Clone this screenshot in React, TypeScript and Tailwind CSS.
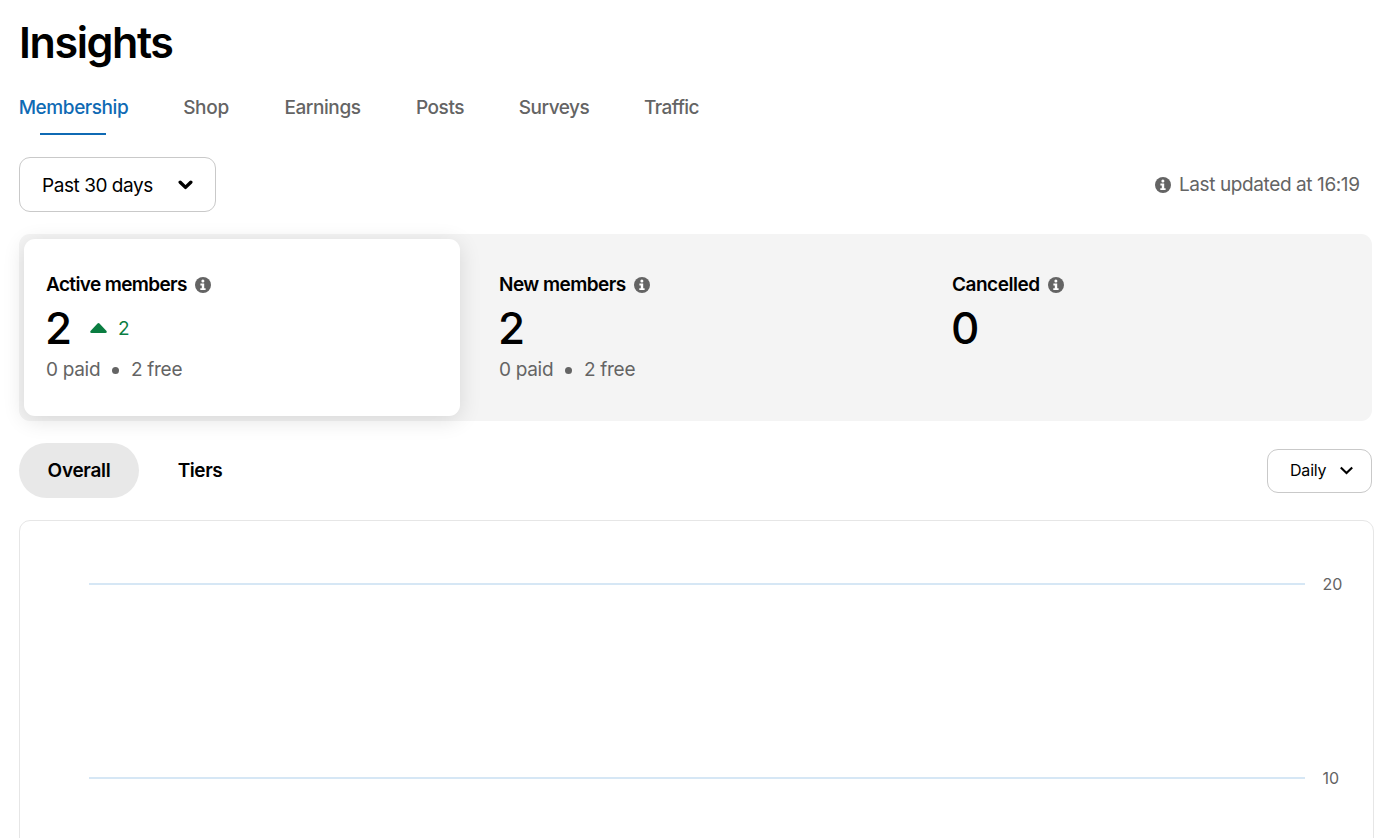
import React from 'react';

interface Tab {
  label: string;
  width: string;
  tracking: string;
}

const tabs: Tab[] = [
  { label: 'Membership', width: 'w-[109px]', tracking: 'tracking-[-0.42px]' },
  { label: 'Shop', width: 'w-[46px]', tracking: 'tracking-[-0.3px]' },
  { label: 'Earnings', width: 'w-[77px]', tracking: 'tracking-[-0.42px]' },
  { label: 'Posts', width: 'w-[48px]', tracking: 'tracking-[-0.45px]' },
  { label: 'Surveys', width: 'w-[70px]', tracking: 'tracking-[-0.5px]' },
  { label: 'Traffic', width: 'w-[55px]', tracking: 'tracking-[-0.55px]' },
];

function InfoIcon() {
  return (
    <svg className="h-4 w-4 shrink-0" viewBox="0 0 16 16">
      <circle cx="8" cy="8" r="8" fill="#646464" />
      <circle cx="7.9" cy="4.1" r="1.5" fill="white" />
      <path d="M5.4 6.5h3.8v4.7h1.4v1.9H5.3v-1.9h1.5V8.4H5.4Z" fill="white" />
    </svg>
  );
}

interface StatProps {
  title: string;
  titleClass: string;
  value: string;
  change?: string;
  paid?: string;
  free?: string;
  active?: boolean;
}

function Stat({ title, titleClass, value, change, paid, free, active }: StatProps) {
  return (
    <div
      className={`h-[177px] w-[436px] rounded-[11px] px-[22px] pt-8 ${
        active ? 'bg-white shadow-[0_4px_22px_rgba(0,0,0,0.12)]' : ''
      }`}
    >
      <div className="flex h-7 items-center gap-2">
        <span className={`whitespace-nowrap text-[19px] font-semibold ${titleClass}`}>{title}</span>
        <InfoIcon />
      </div>
      <div className="flex h-[58px] items-center">
        <span className="-ml-px w-7 text-[44px] leading-[58px] font-medium">{value}</span>
        {change && (
          <>
            <svg className="ml-[17px] h-[10px] w-[17px]" viewBox="0 0 17 10" fill="#0a7d41">
              <path d="M7.5.5a1.5 1.5 0 0 1 2 0L16.5 8q.8 2-1 2H1.5q-1.8 0-1-2Z" />
            </svg>
            <span className="ml-[11px] pt-[3px] text-[19px] text-[#0a7d41]">{change}</span>
          </>
        )}
      </div>
      {paid && (
        <div className="mt-[2px] flex h-[22px] items-center whitespace-nowrap text-[19px] tracking-[-0.3px] text-[#646464]">
          <span className="w-[55px]">{paid}</span>
          <span className="mr-3 ml-[11px] h-[7px] w-[7px] rounded-full bg-[#646464]" />
          <span>{free}</span>
        </div>
      )}
    </div>
  );
}

function GridLine({ label }: { label: string }) {
  return (
    <div className="flex h-6 items-center">
      <div className="h-[2px] w-[1216px] bg-[#d6e7f5]" />
      <span className="ml-[18px] text-[16px] text-[#646464]">{label}</span>
    </div>
  );
}

export default function App() {
  return (
    <div className="h-[838px] w-[1398px] overflow-hidden bg-white pl-[19px] font-['Inter','Liberation_Sans',sans-serif] text-black">
      <h1 className="h-[86px] pt-3 text-[43px] leading-[60px] font-semibold tracking-[-1.4px]">Insights</h1>

      <nav className="flex h-[49px] gap-[55px]">
        {tabs.map((tab, i) => (
          <button
            key={tab.label}
            className={`flex flex-col items-center justify-between text-[19px] leading-[44px] font-medium whitespace-nowrap ${tab.width} ${tab.tracking} ${
              i === 0 ? 'text-[#0f6ab4]' : 'text-[#646464]'
            }`}
          >
            <span>{tab.label}</span>
            {i === 0 && <span className="ml-[21px] h-[2px] w-[66px] self-start bg-[#0f6ab4]" />}
          </button>
        ))}
      </nav>

      <div className="mt-[22px] flex h-[55px] w-[1353px] items-center justify-between">
        <button className="flex h-[55px] w-[197px] items-center rounded-[11px] border border-[#c9c9c9] pl-[22px] text-[19px]">
          <span className="w-[111px] pt-[3px] whitespace-nowrap text-left tracking-[-0.45px]">Past 30 days</span>
          <svg className="ml-[25px] h-[10px] w-[15px]" viewBox="0 0 15 10" fill="none" stroke="black" strokeWidth="3.4" strokeLinecap="round" strokeLinejoin="round">
            <path d="M2.2 2.2l5.3 5.2 5.3-5.2" />
          </svg>
        </button>
        <div className="flex w-[217px] items-center text-[19px] text-[#646464]">
          <InfoIcon />
          <span className="ml-2 pt-px whitespace-nowrap tracking-[-0.4px]">Last updated at 16:19</span>
        </div>
      </div>

      <section className="mt-[22px] flex h-[187px] w-[1353px] gap-[17px] rounded-[11px] bg-[#f4f4f4] p-[5px]">
        <Stat title="Active members" titleClass="tracking-[-0.63px]" value="2" change="2" paid="0 paid" free="2 free" active />
        <Stat title="New members" titleClass="tracking-[-0.55px]" value="2" paid="0 paid" free="2 free" />
        <Stat title="Cancelled" titleClass="tracking-[-0.47px]" value="0" />
      </section>

      <div className="mt-[22px] flex h-[55px] w-[1353px] items-center text-[19px] font-semibold">
        <button className="h-[55px] w-[120px] rounded-full bg-[#e8e8e8] pt-[2px] tracking-[-0.3px]">Overall</button>
        <button className="w-[122px] pt-[2px] tracking-[-0.4px]">Tiers</button>
        <button className="ml-auto flex h-11 w-[105px] items-center rounded-[11px] border border-[#c9c9c9] pl-[22px] text-[16px] font-normal">
          <span className="w-[37px] pb-px text-left tracking-[-0.2px]">Daily</span>
          <svg className="ml-[13px] h-[9px] w-[13px] shrink-0" viewBox="0 0 13 9" fill="none" stroke="black" strokeWidth="2.1">
            <path d="M.8 1.4l5.7 5.6 5.7-5.6" />
          </svg>
        </button>
      </div>

      <section className="mt-[22px] flex h-[340px] w-[1355px] flex-col gap-[170px] rounded-[11px] border border-[#e6e6e6] pt-[51px] pl-[68.5px]">
        <GridLine label="20" />
        <GridLine label="10" />
      </section>
    </div>
  );
}
